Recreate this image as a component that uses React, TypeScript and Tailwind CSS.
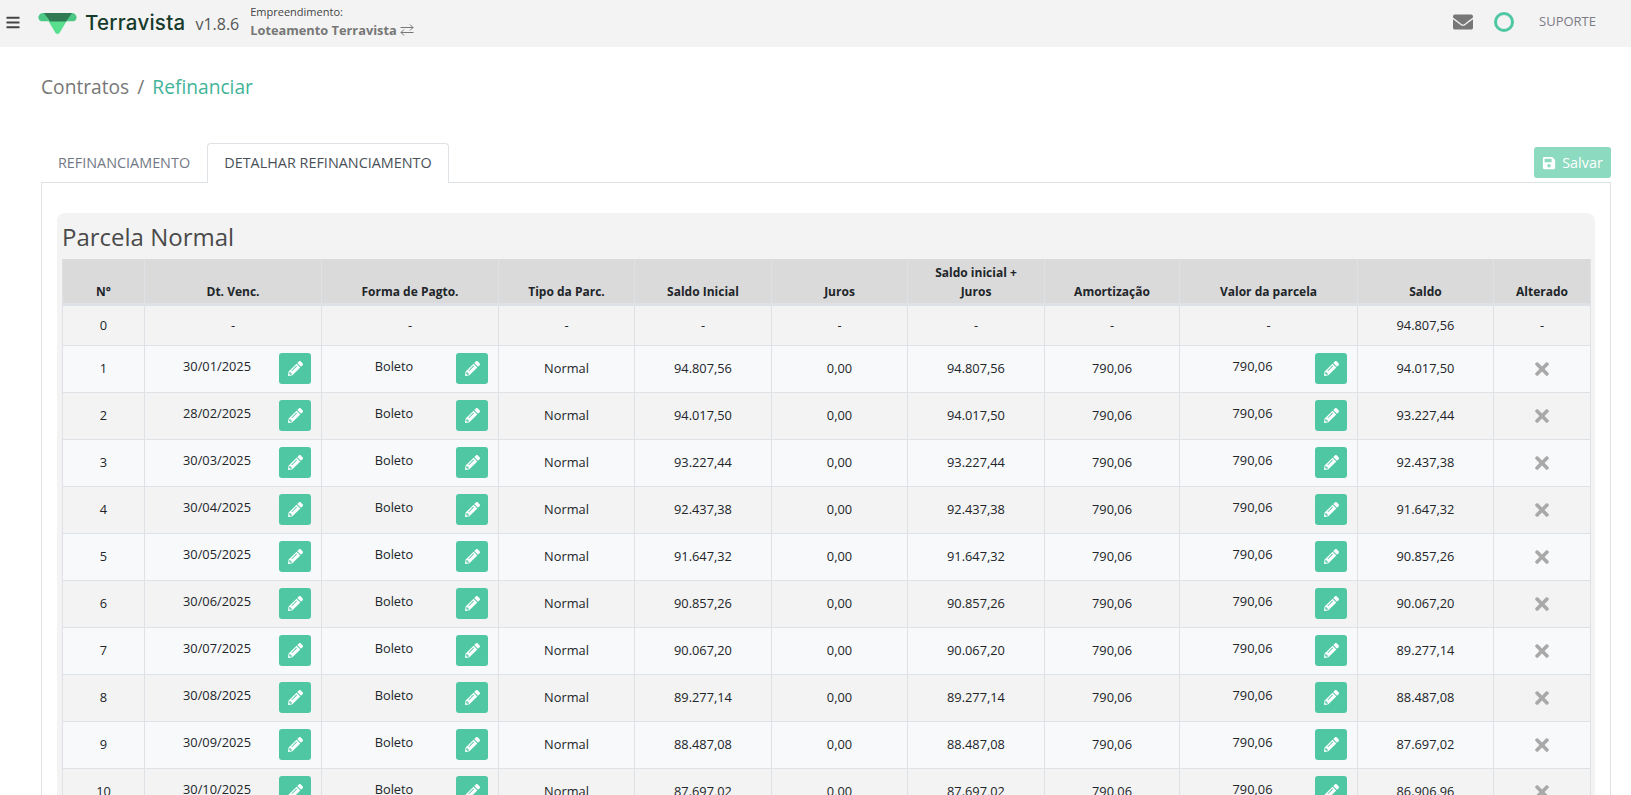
import React from "react";
import { FaBars, FaEnvelope, FaSave, FaPencilAlt, FaTimes } from "react-icons/fa";

const font = "font-['Open_Sans',sans-serif]";

const rows = [
  ["1", "30/01/2025", "94.807,56", "94.017,50"],
  ["2", "28/02/2025", "94.017,50", "93.227,44"],
  ["3", "30/03/2025", "93.227,44", "92.437,38"],
  ["4", "30/04/2025", "92.437,38", "91.647,32"],
  ["5", "30/05/2025", "91.647,32", "90.857,26"],
  ["6", "30/06/2025", "90.857,26", "90.067,20"],
  ["7", "30/07/2025", "90.067,20", "89.277,14"],
  ["8", "30/08/2025", "89.277,14", "88.487,08"],
  ["9", "30/09/2025", "88.487,08", "87.697,02"],
  ["10", "30/10/2025", "87.697,02", "86.906,96"],
];

function EditButton() {
  return (
    <span className="flex h-[31px] w-[32px] shrink-0 items-center justify-center rounded-[3px] bg-[#4fc7a2] text-white">
      <FaPencilAlt className="h-[15px] w-[15px]" />
    </span>
  );
}

function EditCell({ value }: { value: string }) {
  return (
    <td className="border border-[#dee2e6] px-[10px] py-0 align-middle">
      <div className="flex items-center justify-between">
        <span className="flex-1 -translate-y-[2px] text-center">{value}</span>
        <EditButton />
      </div>
    </td>
  );
}

function Cell({ children }: { children: React.ReactNode }) {
  return <td className="border border-[#dee2e6] p-0 text-center align-middle">{children}</td>;
}

function Th({ children }: { children: React.ReactNode }) {
  return (
    <th className="border border-b-[3px] border-[#dee2e6] border-t-0 px-2 pb-[2px] align-bottom text-center text-[12px] font-bold leading-[19px] text-[#212529]">
      {children}
    </th>
  );
}

export default function App() {
  return (
    <div className={`${font} h-[795px] w-[1631px] overflow-hidden bg-white text-[12.8px] text-[#212529]`}>
      <header className="flex h-[47px] items-center bg-[#f3f3f3] pl-[6px]">
        <FaBars className="h-[15px] w-[14px] -translate-y-[1px] text-[#444444]" />
        <svg className="ml-[18px] h-[22px] w-[39px]" viewBox="0 0 39 22" aria-hidden="true">
          <path d="M5 0 H34 Q37 0 38.3 3 Q39.5 7 36 8.2 H3 Q-0.5 7 0.7 3 Q2 0 5 0 Z" fill="#4cc785" />
          <path d="M8 4 L31 4 L21.5 20 Q19.5 22 17.5 20 Z" fill="#5adf8f" />
          <path d="M6 0 H34 L28 8.5 H12 Z" fill="#2f7a52" />
        </svg>
        <span className="ml-[8px] font-['Inter',sans-serif] text-[20.5px] font-medium leading-none tracking-[0.25px] text-[#173b2b]">Terravista</span>
        <span className="ml-[10px] text-[16px] leading-none text-[#555555]">v1.8.6</span>
        <div className="ml-[11px] flex flex-col pb-[5px]">
          <span className="text-[11px] leading-[15px] text-[#444444]">Empreendimento:</span>
          <span className="mt-[3px] flex items-center gap-[3px] text-[12.8px] font-bold leading-[16px] text-[#777777]">
            Loteamento Terravista
            <svg className="h-[12px] w-[14px]" viewBox="0 0 14 12" fill="none" stroke="#777777" strokeWidth="1">
              <path d="M0.5 3.5 H13 M10 0.5 L13 3.5 M13.5 8.5 H1 M4 5.5 L1 8.5 M4 11.5 L1 8.5 M10 6.5 L13 3.5" />
            </svg>
          </span>
        </div>
        <div className="ml-auto flex items-center pb-[3px] pr-[35px]">
          <FaEnvelope className="h-[20px] w-[20px] text-[#777777]" />
          <span className="ml-[21px] h-[20px] w-[20px] rounded-full border-[3px] border-[#4fc7a2]" />
          <span className="ml-[25px] text-[13px] text-[#7b7b86]">SUPORTE</span>
        </div>
      </header>

      <main className="px-[20px]">
        <div className="pl-[21px] pt-[27px] text-[19.2px] leading-[26px]">
          <span className="text-[#777777]">Contratos</span>
          <span className="mx-[8px] text-[#777777]">/</span>
          <span className="text-[#42b498]">Refinanciar</span>
        </div>

        <div className="ml-[21px] mt-[43px] w-[1570px]">
          <div className="relative flex h-[39px] items-end">
            <span className="flex h-[38px] w-[166px] items-center justify-center text-[14.4px] leading-none text-[#737986]">REFINANCIAMENTO</span>
            <span className="relative top-[1px] flex h-[40px] w-[242px] items-center justify-center rounded-t-[4px] border border-b-0 border-[#dee2e6] bg-white text-[14.4px] leading-none text-[#495057]">
              DETALHAR REFINANCIAMENTO
            </span>
            <span className="absolute right-0 top-[4px] flex h-[31px] w-[77px] items-center justify-center gap-[6px] rounded-[3px] bg-[#8cdabf] text-[14.4px] text-white">
              <FaSave className="h-[14px] w-[14px]" />
              Salvar
            </span>
          </div>

          <div className="border border-[#dee2e6] px-[15px] pt-[30px]">
            <div className="rounded-t-[8px] bg-[#f3f3f3] px-[5px]">
              <h2 className="h-[46px] pt-[7px] text-[24px] font-normal leading-[34px] text-[#4a4a4a]">Parcela Normal</h2>
              <table className="w-[1528px] table-fixed border-collapse">
                <colgroup>
                  <col className="w-[82px]" />
                  <col className="w-[177px]" />
                  <col className="w-[177px]" />
                  <col className="w-[136px]" />
                  <col className="w-[137px]" />
                  <col className="w-[136px]" />
                  <col className="w-[137px]" />
                  <col className="w-[135px]" />
                  <col className="w-[178px]" />
                  <col className="w-[136px]" />
                  <col className="w-[97px]" />
                </colgroup>
                <thead>
                  <tr className="h-[45px] bg-[#dadada]">
                    <Th>N°</Th>
                    <Th>Dt. Venc.</Th>
                    <Th>Forma de Pagto.</Th>
                    <Th>Tipo da Parc.</Th>
                    <Th>Saldo Inicial</Th>
                    <Th>Juros</Th>
                    <Th>Saldo inicial +<br />Juros</Th>
                    <Th>Amortização</Th>
                    <Th>Valor da parcela</Th>
                    <Th>Saldo</Th>
                    <Th>Alterado</Th>
                  </tr>
                </thead>
                <tbody>
                  <tr className="h-[41px] bg-[#f3f3f3] [&>td]:pt-[2px]">
                    <Cell>0</Cell>
                    {Array.from({ length: 8 }).map((_, i) => (
                      <Cell key={i}>-</Cell>
                    ))}
                    <Cell>94.807,56</Cell>
                    <Cell>-</Cell>
                  </tr>
                  {rows.map((r, i) => (
                    <tr key={r[0]} className={`h-[47px] ${i % 2 === 0 ? "bg-[#f8f9fb]" : "bg-[#f3f3f3]"}`}>
                      <Cell>{r[0]}</Cell>
                      <EditCell value={r[1]} />
                      <EditCell value="Boleto" />
                      <Cell>Normal</Cell>
                      <Cell>{r[2]}</Cell>
                      <Cell>0,00</Cell>
                      <Cell>{r[2]}</Cell>
                      <Cell>790,06</Cell>
                      <EditCell value="790,06" />
                      <Cell>{r[3]}</Cell>
                      <Cell>
                        <FaTimes className="mx-auto h-[20px] w-[14px] text-[#a9a9a9]" />
                      </Cell>
                    </tr>
                  ))}
                </tbody>
              </table>
            </div>
          </div>
        </div>
      </main>
    </div>
  );
}
